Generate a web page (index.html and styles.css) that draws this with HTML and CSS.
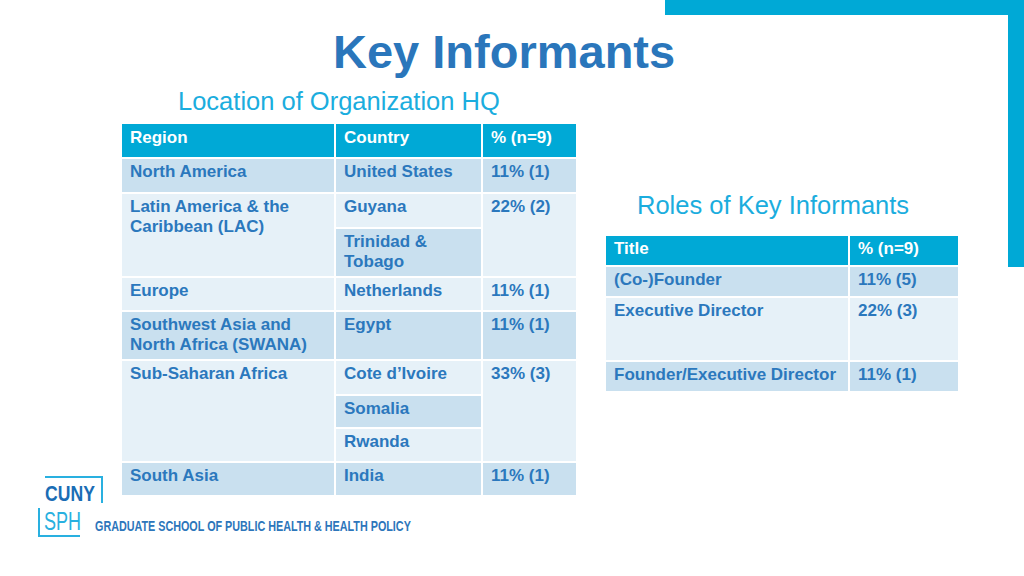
FILE: index.html
```html
<!DOCTYPE html>
<html lang="en">
<head>
<meta charset="utf-8">
<title>Key Informants</title>
<link rel="stylesheet" href="styles.css">
</head>
<body>
<div class="slide">
  <div class="bar-top"></div>
  <div class="bar-right"></div>

  <h1 class="title">Key Informants</h1>

  <div class="content">
    <section class="col-left">
      <h2 class="subtitle sub-left">Location of Organization HQ</h2>
      <div class="grid grid-loc">
        <div class="cell head">Region</div>
        <div class="cell head">Country</div>
        <div class="cell head">% (n=9)</div>

        <div class="cell dark">North America</div>
        <div class="cell dark">United States</div>
        <div class="cell dark">11% (1)</div>

        <div class="cell light span2">Latin America &amp; the Caribbean (LAC)</div>
        <div class="cell light">Guyana</div>
        <div class="cell light span2">22% (2)</div>
        <div class="cell dark">Trinidad &amp; Tobago</div>

        <div class="cell light">Europe</div>
        <div class="cell light">Netherlands</div>
        <div class="cell light">11% (1)</div>

        <div class="cell dark">Southwest Asia and North Africa (SWANA)</div>
        <div class="cell dark">Egypt</div>
        <div class="cell dark">11% (1)</div>

        <div class="cell light span3">Sub-Saharan Africa</div>
        <div class="cell light">Cote d’Ivoire</div>
        <div class="cell light span3">33% (3)</div>
        <div class="cell dark">Somalia</div>
        <div class="cell light">Rwanda</div>

        <div class="cell dark">South Asia</div>
        <div class="cell dark">India</div>
        <div class="cell dark">11% (1)</div>
      </div>
    </section>

    <section class="col-right">
      <h2 class="subtitle sub-right">Roles of Key Informants</h2>
      <div class="grid grid-roles">
        <div class="cell head">Title</div>
        <div class="cell head">% (n=9)</div>

        <div class="cell dark">(Co-)Founder</div>
        <div class="cell dark">11% (5)</div>

        <div class="cell light">Executive Director</div>
        <div class="cell light">22% (3)</div>

        <div class="cell dark">Founder/Executive Director</div>
        <div class="cell dark">11% (1)</div>
      </div>
    </section>
  </div>

  <div class="logo">
    <div class="cuny-box"><span class="cuny">CUNY</span></div>
    <div class="logo-row">
      <div class="sph-box"><span class="sph">SPH</span></div>
      <span class="tagline">GRADUATE SCHOOL OF PUBLIC HEALTH &amp; HEALTH POLICY</span>
    </div>
  </div>
</div>
</body>
</html>
```

FILE: styles.css
```css
* { box-sizing: border-box; }

html, body {
  margin: 0;
  padding: 0;
  background: #ffffff;
}

body {
  font-family: "Liberation Sans", Arial, sans-serif;
}

.slide {
  position: relative;
  width: 1024px;
  height: 576px;
  overflow: hidden;
  background: #ffffff;
}

.bar-top {
  position: absolute;
  left: 665px;
  top: 0;
  width: 359px;
  height: 15px;
  background: #00a9d6;
}

.bar-right {
  position: absolute;
  left: 1008px;
  top: 0;
  width: 16px;
  height: 267px;
  background: #00a9d6;
}

.title {
  margin: 0;
  padding: 26px 0 0 333px;
  font-size: 47px;
  line-height: 52px;
  font-weight: bold;
  color: #2a76bb;
}

.content {
  display: flex;
  align-items: flex-start;
  margin-top: 8px;
}

.subtitle {
  margin: 0;
  font-size: 25.5px;
  line-height: 30px;
  font-weight: normal;
  color: #1badde;
}

.col-left {
  margin-left: 122px;
  width: 454px;
}

.sub-left {
  padding-left: 56px;
  margin-bottom: 8px;
}

.col-right {
  margin-left: 30px;
  padding-top: 104px;
}

.sub-right {
  padding-left: 31px;
  margin-bottom: 16px;
}

.grid {
  display: grid;
  gap: 2px;
  background: #ffffff;
}

.grid-loc {
  grid-template-columns: 212px 145px 93px;
  grid-template-rows: 33px 33px 33px 47px 32px 47px 33px 31px 32px 32px;
}

.grid-roles {
  grid-template-columns: 242px 108px;
  grid-template-rows: 29px 29px 62px 29px;
}

.cell {
  padding: 3px 6px 0 8px;
  font-size: 17px;
  line-height: 20px;
  font-weight: bold;
  color: #2b78bd;
}

.head {
  background: #00a9d6;
  color: #ffffff;
  padding-top: 4px;
}

.grid-roles .head { padding-top: 3px; }

.dark { background: #c9e0ef; }
.light { background: #e6f1f8; }

.span2 { grid-row: span 2; }
.span3 { grid-row: span 3; }

/* Logo */
.logo {
  position: absolute;
  left: 38px;
  top: 476px;
  display: flex;
  flex-direction: column;
}

.cuny-box {
  margin-left: 7px;
  width: 58px;
  height: 27px;
  border-top: 2px solid #29b0e0;
  border-right: 2px solid #29b0e0;
  padding-top: 5px;
}

.cuny {
  display: inline-block;
  font-size: 22px;
  line-height: 22px;
  font-weight: bold;
  color: #1a6db5;
  transform: scaleX(0.8);
  transform-origin: left center;
}

.logo-row {
  display: flex;
  align-items: flex-end;
  margin-top: 5px;
}

.sph-box {
  width: 42px;
  height: 29px;
  border-left: 2px solid #29b0e0;
  border-bottom: 2px solid #29b0e0;
  padding: 1px 0 0 4px;
}

.sph {
  display: inline-block;
  font-weight: normal;
  font-size: 25px;
  line-height: 25px;
  color: #29b0e0;
  transform: scaleX(0.72);
  transform-origin: left center;
}

.tagline {
  display: inline-block;
  margin-left: 15px;
  margin-bottom: 3px;
  font-size: 15.4px;
  line-height: 16px;
  font-weight: bold;
  color: #2d76bb;
  white-space: nowrap;
  transform: scaleX(0.70);
  transform-origin: left center;
}
```
